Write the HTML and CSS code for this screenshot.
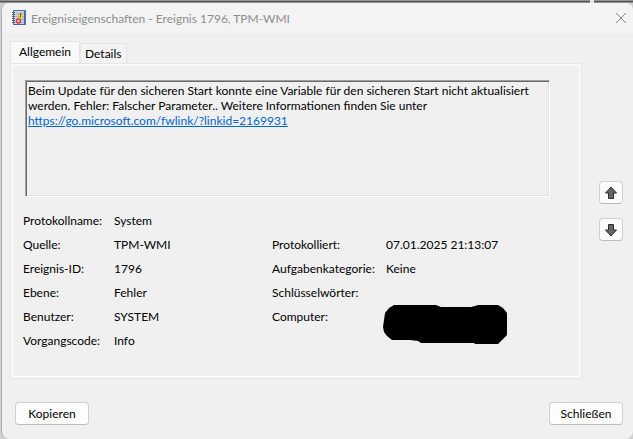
FILE: index.html
```
<!DOCTYPE html>
<html lang="de">
<head>
    <meta charset="UTF-8">
    <meta name="viewport" content="width=device-width, initial-scale=1.0">
    <title>Ereigniseigenschaften - Ereignis 1796, TPM-WMI</title>
    <link rel="stylesheet" href="styles.css">
</head>
<body>
    <div class="dialog">
        <header class="title-bar">
            <svg class="app-icon" width="16" height="16" viewBox="0 0 16 16" aria-hidden="true">
                <rect x="2.5" y="0.5" width="12" height="14" fill="#c3d3ea" stroke="#5874ad"/>
                <path d="M13.5 1v13M3 14.5h12" stroke="#4664a0"/>
                <path d="M5 3.5h8M5 6.5h8M5 9.5h8M5 12.5h8" stroke="#9db3d8"/>
                <path d="M1 2.5h3M1 4.5h3M1 6.5h3M1 8.5h3M1 10.5h3M1 12.5h3" stroke="#5c5c66"/>
                <path d="M9.5 2l3 5.5h-6z" fill="#ffd92e" stroke="#e3b820" stroke-width="0.8" stroke-linejoin="round"/>
                <path d="M9.5 3.5v2M9.5 6.2v1" stroke="#222"/>
                <circle cx="7.5" cy="11" r="2.8" fill="#d94343"/>
                <path d="M6.5 10l2 2M8.5 10l-2 2" stroke="#fff" stroke-width="0.8"/>
            </svg>
            <h1 class="title">Ereigniseigenschaften - Ereignis 1796, TPM-WMI</h1>
            <button class="close" type="button" aria-label="Schließen">
                <svg width="12" height="12" viewBox="0 0 12 12"><path d="M1 1l10 10M11 1L1 11" stroke="#858585" fill="none"/></svg>
            </button>
        </header>

        <main class="content">
            <div class="tabs-area">
                <div class="tabs" role="tablist">
                    <button class="tab active" id="tab-general" type="button" role="tab" aria-selected="true" aria-controls="general">Allgemein</button>
                    <button class="tab" type="button" role="tab" aria-selected="false">Details</button>
                </div>
                <section class="panel" id="general" role="tabpanel" aria-labelledby="tab-general">
                    <div class="message">
                        Beim Update für den sicheren Start konnte eine Variable für den sicheren Start nicht aktualisiert werden. Fehler: Falscher Parameter.. Weitere Informationen finden Sie unter<br>
                        <a href="https://go.microsoft.com/fwlink/?linkid=2169931">https://go.microsoft.com/fwlink/?linkid=2169931</a>
                    </div>
                    <dl class="details">
                        <dt>Protokollname:</dt><dd class="wide">System</dd>
                        <dt>Quelle:</dt><dd>TPM-WMI</dd>
                        <dt>Protokolliert:</dt><dd>07.01.2025 21:13:07</dd>
                        <dt>Ereignis-ID:</dt><dd>1796</dd>
                        <dt>Aufgabenkategorie:</dt><dd>Keine</dd>
                        <dt>Ebene:</dt><dd>Fehler</dd>
                        <dt>Schlüsselwörter:</dt><dd></dd>
                        <dt>Benutzer:</dt><dd>SYSTEM</dd>
                        <dt>Computer:</dt>
                        <dd class="redacted">
                            <svg width="124" height="40" viewBox="0 0 124 40" aria-hidden="true">
                                <path d="M11 0H53L58 2H88L92 1L95 0H115L120 3L124 8V30L115 39H92L91 38H38L35 36L27 35H9L4 31L1 27L0 22L2 8L6 3Z"/>
                            </svg>
                        </dd>
                        <dt>Vorgangscode:</dt><dd>Info</dd>
                    </dl>
                </section>
            </div>
            <div class="nav">
                <button class="button" type="button" aria-label="Vorheriges Ereignis">
                    <svg width="14" height="14" viewBox="0 0 14 14"><path d="M7 1l5.5 6h-3v5.5h-5V7h-3z" fill="#666" stroke="#2d2d2d"/></svg>
                </button>
                <button class="button" type="button" aria-label="Nächstes Ereignis">
                    <svg width="14" height="14" viewBox="0 0 14 14"><path d="M7 13l5.5-6h-3V1.5h-5V7h-3z" fill="#666" stroke="#2d2d2d"/></svg>
                </button>
            </div>
        </main>

        <footer class="actions">
            <button class="button" type="button">Kopieren</button>
            <button class="button" type="button">Schließen</button>
        </footer>
    </div>
</body>
</html>
```
FILE: styles.css
```
* {
    box-sizing: border-box;
}

body {
    margin: 0;
    padding: 3px 0 0 1px;
    min-height: 100vh;
    display: flex;
    font-family: "Segoe UI", Lato, sans-serif;
    font-size: 12px;
    line-height: 15px;
    color: #000;
    /* edge of the window that lies behind the dialog */
    background:
        linear-gradient(#e8e8e8, #e8e8e8) right 39px top / 4px 3px no-repeat,
        linear-gradient(#929292 1px, #555 1px, #555 2px, #929292 2px) top / 100% 3px no-repeat,
        #d0d0d0;
}

.dialog {
    flex: 1;
    display: flex;
    flex-direction: column;
    background-color: #f0f0f0;
    border-left: 1px solid #b0b0b0;
    border-radius: 8px;
    overflow: hidden;
}

.title-bar {
    display: flex;
    align-items: center;
    gap: 4px;
    height: 30px;
    padding: 0 6px 0 9px;
    background-color: #f3f3f3;
}

.title {
    flex: 1;
    margin: 0;
    font-size: 12px;
    font-weight: normal;
    color: #8e8e8e;
}

.close {
    display: flex;
    padding: 0;
    border: 0;
    background: none;
}

.content {
    display: flex;
    gap: 17px;
    padding: 8px 10px 0 8px;
}

.tabs-area {
    flex: 1;
    min-width: 0;
}

.tabs {
    display: flex;
    align-items: flex-end;
}

.tab {
    min-width: 44px;
    height: 20px;
    padding: 0 4px;
    border: 1px solid #e5e5e5;
    border-bottom: 0;
    background-color: #f3f3f3;
    font: inherit;
    color: inherit;
}

.tab.active {
    min-width: 70px;
    height: 22px;
    padding-bottom: 2px;
    background-color: #f9f9f9;
}

.panel {
    padding: 16px 31px 26px 12px;
    border: 1px solid #e5e5e5;
    box-shadow: inset 0 0 0 2px #f9f9f9;
}

.message {
    height: 117px;
    margin-left: 2px;
    padding: 2px;
    border: 1px solid;
    border-color: #a0a0a0 #fff #fff #a0a0a0;
    box-shadow: inset 1px 1px #696969, inset -1px -1px #e3e3e3;
    overflow: auto;
}

.message a {
    color: #0066cc;
}

.details {
    display: grid;
    grid-template-columns: 91px 158px 114px 1fr;
    grid-auto-rows: 24px;
    align-items: center;
    margin: 11px 0 0;
}

.details dd {
    margin: 0;
}

.details .wide {
    grid-column: span 3;
}

.redacted {
    position: relative;
    height: 24px;
}

/* the scribble spills over the neighbouring rows */
.redacted svg {
    position: absolute;
    top: 1px;
    left: -3px;
}

.nav {
    display: flex;
    flex-direction: column;
    justify-content: center;
    gap: 14px;
    padding-top: 2px;
}

.button {
    display: flex;
    align-items: center;
    justify-content: center;
    min-width: 24px;
    height: 23px;
    padding: 0;
    border: 1px solid #d0d0d0;
    border-bottom-color: #bbb;
    border-radius: 4px;
    background-color: #fdfdfd;
    font: inherit;
    color: inherit;
}

.actions {
    display: flex;
    justify-content: space-between;
    padding: 23px 10px 14px 13px;
}

.actions .button {
    min-width: 74px;
}
```
